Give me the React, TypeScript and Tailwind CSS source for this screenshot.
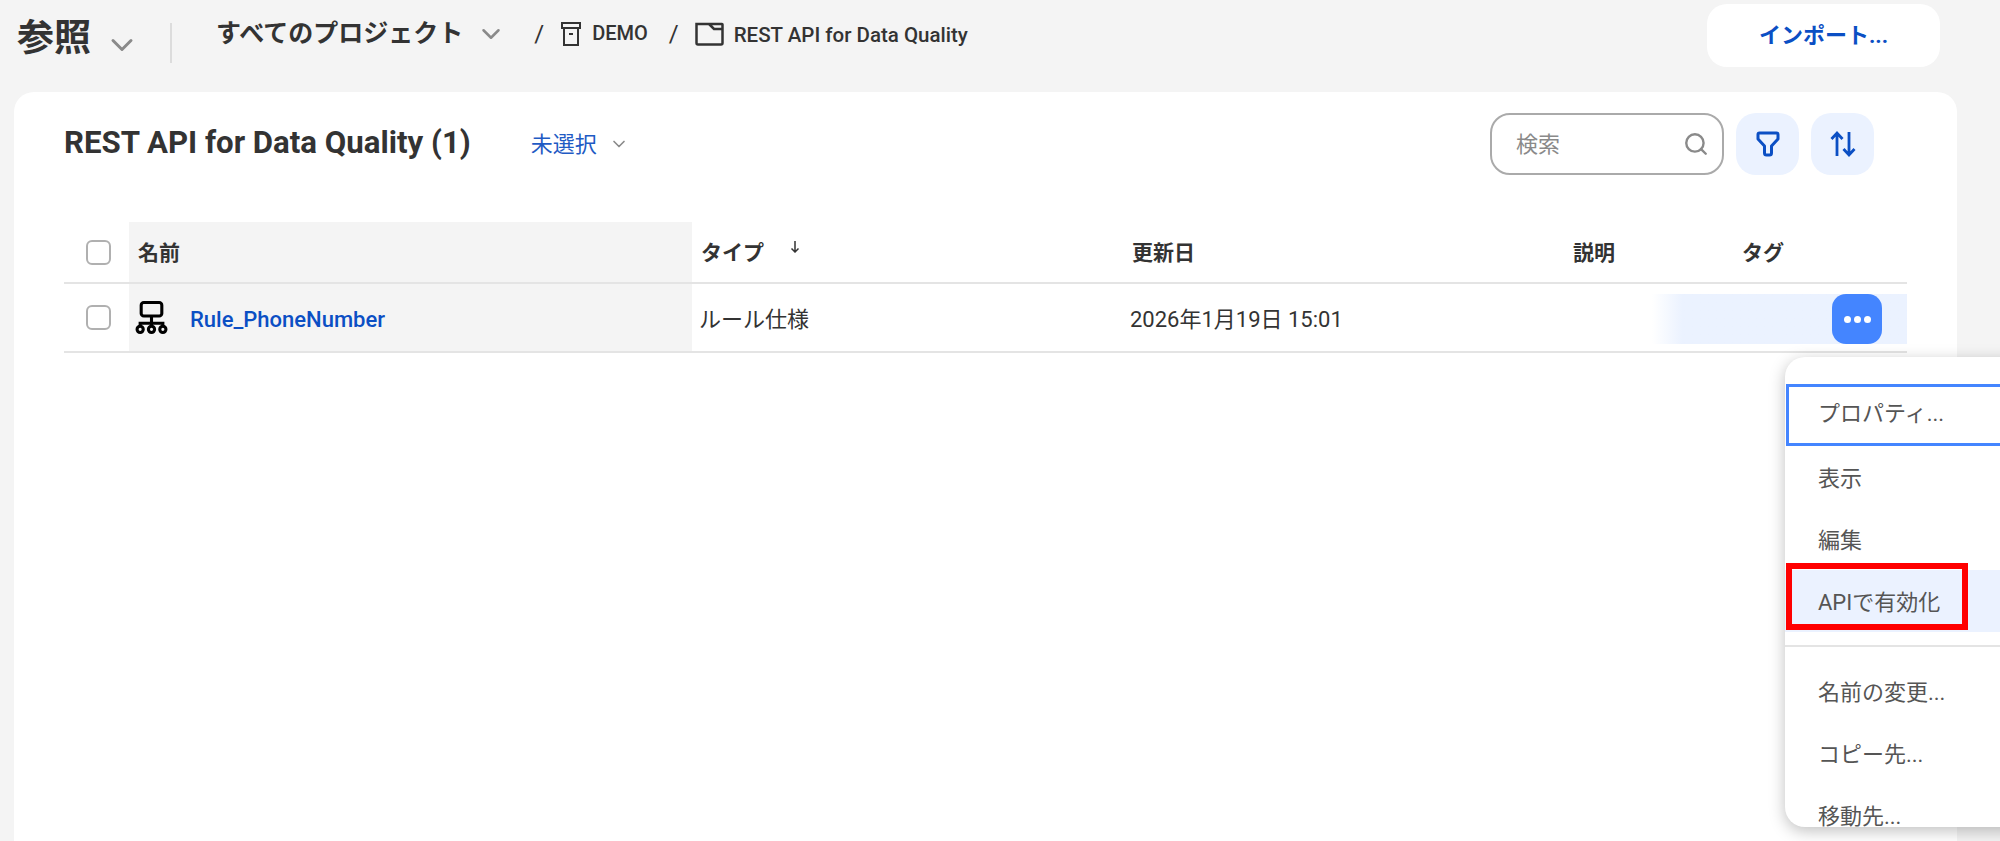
import { ChevronDown, Search } from "lucide-react";

const FONT = "font-['Roboto','Noto_Sans_CJK_JP',sans-serif]";

// ---------------- ICONS ----------------
function IconBox() {
  return (
    <svg className="w-[20px] h-[26px] text-[#333]" viewBox="0 0 20 26" fill="none" stroke="currentColor" strokeWidth="2">
      <path d="M1 2h18v5H1zM3 7v17h14V7M8 13h4" />
    </svg>
  );
}

function IconFolder() {
  return (
    <svg className="w-[29px] h-[24px] text-[#333]" viewBox="0 0 29 24" fill="none" stroke="currentColor" strokeWidth="2.500">
      <path d="M1.500 2h25.500a.5.5 0 01.500.500V21a1.500 1.500 0 01-1.500 1.500H3A1.500 1.500 0 011.500 21V2zM14 2l5 5h8.500" />
    </svg>
  );
}

function IconFilter() {
  return (
    <svg className="w-[24px] h-[26px] text-[#0b4fc4]" viewBox="0 0 24 26" fill="none" stroke="currentColor" strokeWidth="3" strokeLinejoin="round">
      <path d="M3.500 2h17a1.500 1.500 0 011.500 1.500V8l-6.500 7v7a2 2 0 01-2 2h-3a2 2 0 01-2-2v-7L2 8V3.500A1.500 1.500 0 013.500 2z" />
    </svg>
  );
}

function IconSort() {
  return (
    <svg className="w-[26px] h-[28px] text-[#0b4fc4]" viewBox="0 0 26 28" fill="none" stroke="currentColor" strokeWidth="2.800">
      <path d="M7 26V3M1.500 9L7 3l5.500 6M19 2v23M13.500 19l5.500 6 5.500-6" />
    </svg>
  );
}

function IconRule() {
  return (
    <svg className="w-[33px] h-[33px] text-black" viewBox="0 0 32 32" fill="none" stroke="currentColor" strokeWidth="3">
      <rect x="6" y="1.500" width="20" height="13" rx="2.500" />
      <path d="M16 14.500v7M5 25v-3.500h22V25M16 21.500V25" />
      <circle cx="5" cy="27.500" r="3" />
      <circle cx="16" cy="27.500" r="3" />
      <circle cx="27" cy="27.500" r="3" />
    </svg>
  );
}

function Checkbox() {
  return <div className="w-[25px] h-[25px] rounded-[6px] border-2 border-[#b0b0b0] bg-white" />;
}

const MENU_TOP = ["表示", "編集"];
const MENU_BOTTOM = ["名前の変更...", "コピー先...", "移動先..."];

// ========== PAGE ==========
export default function App() {
  return (
    <div className={`${FONT} relative w-[2000px] h-[841px] overflow-hidden bg-[#f4f4f4] text-[#333]`}>
      {/* TOP BAR */}
      <div className="h-[92px] flex items-start">
        <div className="flex items-center pl-[17px] pt-[15px] h-[55px] box-content">
          <span className="text-[37px] leading-[44px] font-bold mt-[-8px]">参照</span>
          <ChevronDown className="ml-[13px] mt-[4px] w-[36px] h-[36px] text-[#8a8a8a]" strokeWidth={2} />
          <div className="ml-[30px] w-[2px] h-[40px] bg-[#dcdcdc]" />
        </div>
        <div className="flex items-center h-[68px] ml-[44px]">
          <span className="text-[25px] font-bold whitespace-nowrap">すべてのプロジェクト</span>
          <ChevronDown className="ml-[13px] w-[30px] h-[30px] text-[#8a8a8a]" strokeWidth={2} />
          <span className="ml-[28px] text-[24px] font-normal">/</span>
          <div className="ml-[17px]"><IconBox /></div>
          <span className="ml-[11px] text-[20px] font-medium mt-[-2px]">DEMO</span>
          <span className="ml-[21px] text-[24px] font-normal">/</span>
          <div className="ml-[16px]"><IconFolder /></div>
          <span className="ml-[10px] text-[20.500px] font-medium whitespace-nowrap pt-[2px]">REST API for Data Quality</span>
        </div>
        <button className="ml-auto mr-[60px] mt-[4px] w-[233px] h-[63px] rounded-[20px] bg-white text-[22px] font-bold text-[#0b4fc4]">
          インポート...
        </button>
      </div>

      {/* CARD */}
      <div className="ml-[14px] w-[1943px] h-[749px] rounded-t-[20px] bg-white px-[50px]">
        <div className="h-[130px] flex items-start">
          <h1 className="mt-[29px] text-[31.200px] leading-[44px] font-bold whitespace-nowrap">REST API for Data Quality (1)</h1>
          <div className="mt-[30px] ml-[60px] h-[44px] flex items-center text-[22px] text-[#1f5bc4]">
            未選択
            <ChevronDown className="ml-[12px] w-[20px] h-[20px] text-[#8a8a8a]" strokeWidth={2} />
          </div>
          <div className="ml-auto mr-[33px] mt-[21px] flex gap-[12px]">
            <div className="w-[234px] h-[62px] rounded-[20px] border-2 border-[#aaaaaa] flex items-center pl-[24px] pr-[13px] justify-between">
              <span className="text-[22px] text-[#8a8a8a]">検索</span>
              <Search className="w-[26px] h-[26px] text-[#8a8a8a]" strokeWidth={2.2} />
            </div>
            <div className="w-[63px] h-[62px] rounded-[20px] bg-[#ebf2ff] flex items-center justify-center"><IconFilter /></div>
            <div className="w-[63px] h-[62px] rounded-[20px] bg-[#ebf2ff] flex items-center justify-center"><IconSort /></div>
          </div>
        </div>

        {/* TABLE */}
        <div className="w-[1843px]">
          <div className="grid grid-cols-[65px_563px_431px_442px_169px_173px] h-[62px] border-b-2 border-[#e4e4e4] text-[21px] font-bold items-center">
            <div className="pl-[22px] flex items-center"><Checkbox /></div>
            <div className="bg-[#f4f4f4] h-full pl-[9px] pt-[4px] flex items-center">名前</div>
            <div className="pl-[9px] pt-[4px] flex items-center">
              タイプ
              <svg className="ml-[26px] mb-[14px] w-[10px] h-[12px] text-[#333]" viewBox="0 0 10 12" fill="none" stroke="currentColor" strokeWidth="1.500">
                <path d="M5 0v11M1.500 7.500L5 11l3.500-3.500" />
              </svg>
            </div>
            <div className="pl-[9px] pt-[4px]">更新日</div>
            <div className="pl-[8px] pt-[4px]">説明</div>
            <div className="pl-[8px] pt-[4px]">タグ</div>
          </div>
          <div className="relative grid grid-cols-[65px_563px_431px_442px_169px_173px] h-[69px] border-b-2 border-[#e4e4e4] text-[22px] items-center">
            <div className="pl-[22px] flex items-center"><Checkbox /></div>
            <div className="bg-[#f4f4f4] h-full pl-[6px] flex items-center">
              <IconRule />
              <span className="ml-[22px] font-medium text-[#0b4fc4] pt-[4px]">Rule_PhoneNumber</span>
            </div>
            <div className="pl-[7px] pt-[4px]">ルール仕様</div>
            <div className="pl-[7px] pt-[4px] whitespace-nowrap">2026年1月19日 15:01</div>
            <div />
            <div />
            <div className="absolute right-0 top-[10px] w-[255px] h-[50px] bg-gradient-to-r from-white to-[#ebf2ff] to-[12%] flex justify-end pr-[25px]">
              <div className="w-[50px] h-[50px] rounded-[14px] bg-[#4485ff] flex items-center justify-center gap-[3px]">
                <span className="w-[7px] h-[7px] rounded-full bg-white" />
                <span className="w-[7px] h-[7px] rounded-full bg-white" />
                <span className="w-[7px] h-[7px] rounded-full bg-white" />
              </div>
            </div>
          </div>
        </div>
      </div>

      {/* CONTEXT MENU */}
      <div className="absolute left-[1785px] top-[357px] w-[260px] h-[470px] overflow-hidden rounded-[20px] bg-white shadow-[0_4px_16px_rgba(0,0,0,0.25)] pt-[27px] text-[22px] text-[#555]">
        <div className="h-[62px] ml-[1px] pl-[29px] pb-[3px] border-[3px] border-[#4485ff] flex items-center">プロパティ...</div>
        {MENU_TOP.map((item) => (
          <div key={item} className="h-[62px] pl-[33px] pt-[2px] flex items-center">{item}</div>
        ))}
        <div className="h-[62px] pl-[33px] pt-[2px] flex items-center bg-[#ebf2ff]">APIで有効化</div>
        <div className="mt-[13px] mb-[13px] h-[2px] bg-[#e4e4e4]" />
        {MENU_BOTTOM.map((item) => (
          <div key={item} className="h-[62px] pl-[33px] pt-[2px] flex items-center">{item}</div>
        ))}
      </div>

      {/* RED HIGHLIGHT */}
      <div className="absolute left-[1786px] top-[563px] w-[182px] h-[67px] border-[6px] border-[#ff0000]" />
    </div>
  );
}
